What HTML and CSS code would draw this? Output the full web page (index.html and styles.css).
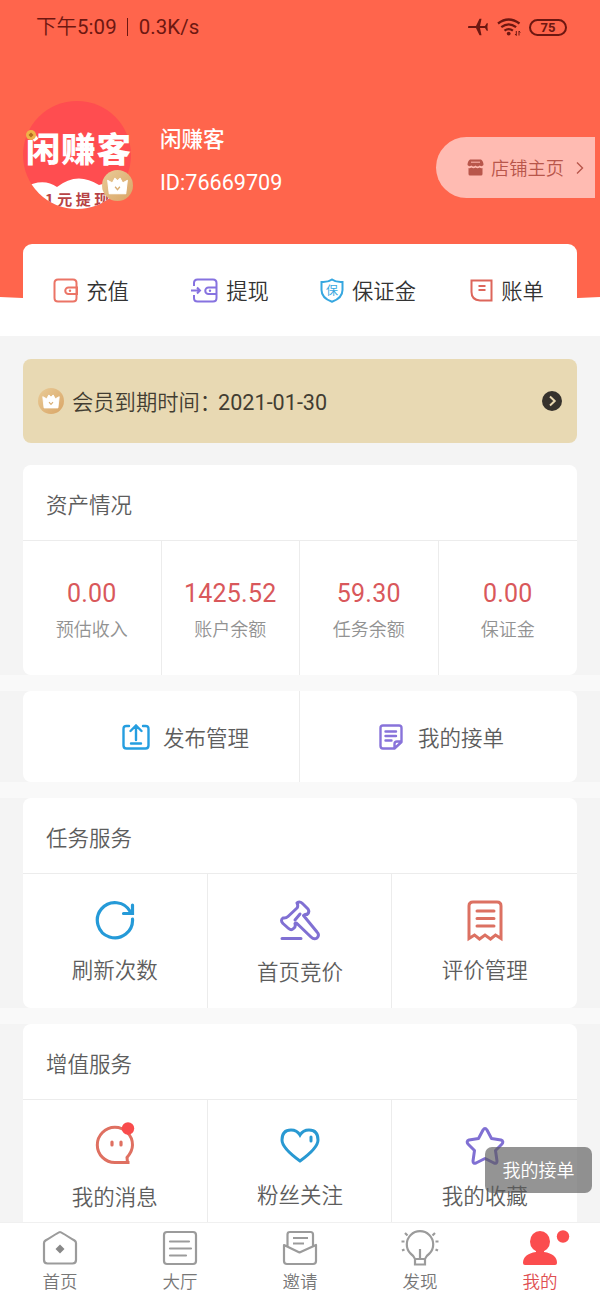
FILE: index.html
```html
<!DOCTYPE html>
<html lang="zh-CN">
<head>
<meta charset="utf-8">
<title>我的</title>
<link rel="stylesheet" href="styles.css">
</head>
<body>
<svg width="0" height="0" class="defs">
  <defs>
    <linearGradient id="gold" x1="0" y1="0" x2="1" y2="1"><stop offset="0" stop-color="#e9cb97"/><stop offset="1" stop-color="#d9a566"/></linearGradient>
    <symbol id="crown" viewBox="0 0 30 30">
      <circle cx="15" cy="15" r="15" fill="url(#gold)"/>
      <path d="M5.500 10 10 12.500 12.500 8 15 10.500 17.500 8 20 12.500 24.500 10 23 23H7z" fill="#fff" stroke="#fff" stroke-linejoin="round"/>
      <path d="M12.700 16.200 15 19l2.300-2.800" fill="none" stroke="#d9ae74" stroke-width="1.300"/>
    </symbol>
  </defs>
</svg>
<div class="screen">
  <header class="hero">
    <svg class="hero-bg" width="600" height="310" viewBox="0 0 600 310"><path d="M0 0H600V297Q300 312 0 297Z" fill="#ff654c"/></svg>
    <div class="status">
      <span class="clock">下午5:09<i class="bar"></i>0.3K/s</span>
      <span class="signals">
        <svg width="21" height="18" viewBox="0 0 21 18" fill="#6d1711"><path d="M1 7.900h7L11.500.800h2L12 7.900h5l1.700-2.600h1.200l-.5 3.700.5 3.700h-1.200L17 10.100h-5l1.500 7.100h-2L8 10.100H1a1.100 1.100 0 0 1 0-2.200z"/></svg>
        <svg width="24" height="19" viewBox="0 0 24 19" fill="none" stroke="#6d1711" stroke-width="2.300"><path d="M1 5.500Q11.500-2.500 22.500 5.500M4.300 9.200q7.400-5.600 14.800 0M7.500 12.700q4.200-3.200 8.400 0"/><circle cx="11.700" cy="15.600" r="1.900" fill="#6d1711" stroke="none"/><path d="M19.300 13v4.500M22 13v4.500M19.300 17.500l-1.300-1.500M22 13l1.300 1.500" stroke-width="1"/></svg>
        <b class="battery">75</b>
      </span>
    </div>
    <div class="profile">
      <div class="avatar">
        <svg width="112" height="109" viewBox="0 0 112 109">
          <defs><clipPath id="round"><circle cx="54" cy="54" r="54"/></clipPath></defs>
          <g clip-path="url(#round)">
            <rect width="112" height="109" fill="#ff4d50"/>
            <path d="M0 87Q20 76 34 86 54 70 76 84 92 78 112 90V109H0z" fill="#fff"/>
            <text x="22" y="103.500" class="logo-sub">1元提现</text>
          </g>
          <text x="3" y="61" class="logo-name" textLength="105">闲赚客</text>
          <circle cx="8" cy="34" r="5" fill="#efb347"/><path d="M8 31.500 10.500 34 8 36.500 5.500 34z" fill="#b26a20"/>
        </svg>
        <svg class="badge" width="31" height="31"><use href="#crown"/></svg>
      </div>
      <div class="who"><h1>闲赚客</h1><p>ID:76669709</p></div>
      <a class="shop">
        <svg width="17" height="17" viewBox="0 0 17 17"><path d="M3 .500H14Q16.500 2 16.500 6 15 8 12.700 6.500 10.500 8.500 8.500 6.500 6.500 8.500 4.300 6.500 2 8 .500 6 .500 2 3 .500z" fill="#b8564b"/><path d="M1.500 9Q3 9.500 4.300 8.600 6.500 10 8.500 8.600 10.500 10 12.700 8.600 14 9.500 15.500 9V15Q15.500 16.500 14 16.500H3Q1.500 16.500 1.500 15z" fill="#b8564b"/><path d="M4 3.200h9" stroke="#ffb9b0"/></svg>
        <span>店铺主页</span>
        <svg width="8" height="14" viewBox="0 0 8 14" fill="none" stroke="#b8564b" stroke-width="1.400"><path d="M1 1.500 6.500 7 1 12.500"/></svg>
      </a>
    </div>
    <nav class="wallet">
      <a><svg width="25" height="25" viewBox="0 0 25 25" fill="none" stroke="#eb7466" stroke-width="2"><path d="M23.500 9V5Q23.500 1.500 20 1.500H5Q1.500 1.500 1.500 5V20Q1.500 23.500 5 23.500H20Q23.500 23.500 23.500 20V5M24 9.500H15.500a3 3 0 0 0 0 6.500H24z"/><circle cx="17" cy="12.700" r="1.200" fill="#eb7466" stroke="none"/></svg><span>充值</span></a>
      <a><svg width="27" height="25" viewBox="0 0 27 25" fill="none" stroke="#8672e0" stroke-width="2"><path d="M3 8V5Q3 1.500 6.500 1.500H22Q25.500 1.500 25.500 5V20Q25.500 23.500 22 23.500H6.500Q3 23.500 3 20V17M26 9.500H17.500a3 3 0 0 0 0 6.500H26M25.500 5V20M0 12.500H8.500M6 9.500l3 3-3 3"/><circle cx="19" cy="12.700" r="1.200" fill="#8672e0" stroke="none"/></svg><span>提现</span></a>
      <a><svg width="24" height="25" viewBox="0 0 24 25"><path d="M12 1.500Q16 4.500 22.500 4V12Q22.500 20 12 23.800 1.500 20 1.500 12V4Q8 4.500 12 1.500z" fill="none" stroke="#36a7e0" stroke-width="2"/><text x="6" y="16.500" class="shield-text">保</text></svg><span>保证金</span></a>
      <a><svg width="23" height="23" viewBox="0 0 23 23" fill="none" stroke="#dd665b" stroke-width="2"><path d="M1.500 1.500h20v20H10Q1.500 21 1.500 13z"/><path d="M8.500 7H15.500M8.500 11H15.500"/></svg><span>账单</span></a>
    </nav>
  </header>

  <main>
    <section class="vip">
      <svg width="26" height="26"><use href="#crown" width="26" height="26"/></svg>
      <span>会员到期时间：<em>2021-01-30</em></span>
      <svg class="go" width="20" height="20" viewBox="0 0 20 20"><circle cx="10" cy="10" r="10" fill="#36322d"/><path d="M8 5.500 12.700 10 8 14.500" fill="none" stroke="#ead9b2" stroke-width="2"/></svg>
    </section>

    <section class="card">
      <h2>资产情况</h2>
      <div class="assets">
        <div><strong>0.00</strong><span>预估收入</span></div>
        <div><strong>1425.52</strong><span>账户余额</span></div>
        <div><strong>59.30</strong><span>任务余额</span></div>
        <div><strong>0.00</strong><span>保证金</span></div>
      </div>
    </section>
    <div class="band"></div>
    <section class="card manage">
      <a class="publish"><svg width="28" height="26" viewBox="0 0 28 26" fill="none" stroke="#259ee0" stroke-width="2.400" stroke-linecap="round"><path d="M7 2H4.500Q1.500 2 1.500 5V21.500Q1.500 24.500 4.500 24.500H23.500Q26.500 24.500 26.500 21.500V5Q26.500 2 23.500 2H21M14 16V2M8.500 7 14 1.500 19.500 7M9 19.500H19"/></svg><span>发布管理</span></a>
      <a class="orders"><svg width="24" height="26" viewBox="0 0 24 26" fill="none" stroke="#8873da" stroke-width="2.400" stroke-linecap="round" stroke-linejoin="round"><path d="M22.500 15V4Q22.500 1.500 20 1.500H4Q1.500 1.500 1.500 4V22Q1.500 24.500 4 24.500H15.500L22.500 18V15M15.500 24V20Q15.500 17.500 18 17.500H22M6.500 7.500H17M6.500 12H17M6.500 16.500H12.500"/></svg><span>我的接单</span></a>
    </section>
    <div class="band"></div>
    <section class="card">
      <h2>任务服务</h2>
      <div class="tiles">
        <a><svg width="40" height="40" viewBox="0 0 40 40" fill="none" stroke="#259ad8" stroke-width="3.200"><path d="M37.500 19A17.600 17.600 0 1 1 35.500 12M37.500 5V13.500H28.500" stroke-linecap="round"/></svg>刷新次数</a>
        <a class="low"><svg width="40" height="42" viewBox="0 0 40 42" fill="none" stroke="#8070d3" stroke-width="3" stroke-linecap="round" stroke-linejoin="round"><path d="M17 3Q20 .500 23 4L28 9Q30 12 27 14.500 25 14 23.500 15.500L37 32Q40 35 37 38 34 40 31 37L17.500 24Q16 22.500 15 23.500 16 27 13.500 28.500 11 31 8 28L3 23.500Q0 20 3 18 6 18.500 8 16.500L17 8Q18.500 6 17 3z"/><path d="M20 14 15 20M2 38.500H21"/></svg>首页竞价</a>
        <a><svg width="36" height="42" viewBox="0 0 36 42" fill="none" stroke="#dc7162" stroke-width="3"><path d="M2 38.500V6Q2 2 6 2H30Q34 2 34 6V38.500L28.500 35 23.500 39 18 35 12.500 39 7.500 35z"/><path d="M10 11H27M10 18.500H27M10 26H27" stroke-linecap="round"/></svg>评价管理</a>
      </div>
    </section>
    <div class="band"></div>
    <section class="card last">
      <h2>增值服务</h2>
      <div class="tiles">
        <a class="message"><svg width="40" height="43" viewBox="0 0 40 43"><path d="M34.500 40.500H20A17.600 17.600 0 1 1 37.500 23Q37.500 29 32 35.500L32.500 40.500" fill="none" stroke="#df7061" stroke-width="3"/><path d="M17 20v3M26 20v3" stroke="#df7061" stroke-width="3.200" stroke-linecap="round"/><circle cx="33" cy="6.500" r="6.200" fill="#f94b4c"/></svg>我的消息</a>
        <a class="fans"><svg width="40" height="36" viewBox="0 0 40 36" fill="none" stroke="#2999d2" stroke-width="3"><path d="M20 33Q2 20 2 12 2 2 11 2 17 2 20 7 23 2 29 2 38 2 38 12 38 20 20 33z"/><path d="M31 9V13" stroke-linecap="round"/></svg>粉丝关注</a>
        <a class="saved"><svg width="40" height="38" viewBox="0 0 40 38" fill="none" stroke="#8070d3" stroke-width="3" stroke-linejoin="round"><path d="M18 3Q20 0 22 3L26.500 11.500 36 13Q39 14 37 17L30.500 23.500 32 34Q32 37 29 36L20 31.500 11 36Q8 37 8 34L9.500 23.500 3 17Q1 14 4 13L13.500 11.500z"/></svg>我的收藏</a>
      </div>
    </section>
  </main>

  <div class="toast">我的接单</div>
  <footer class="tabs">
    <a><svg width="36" height="36" viewBox="0 0 36 36" fill="none" stroke="#9b9b9b" stroke-width="2.200"><path d="M18 2Q19 2 32.500 10.500 34 11.500 34 13V30Q34 33.500 30.500 33.500H5.500Q2 33.500 2 30V13Q2 11.500 3.500 10.500 17 2 18 2z"/><path d="M18 14.500 22.500 19 18 23.500 13.500 19z" fill="#888" stroke="none"/></svg>首页</a>
    <a><svg width="36" height="36" viewBox="0 0 36 36" fill="none" stroke="#9b9b9b" stroke-width="2.200" stroke-linecap="round"><rect x="2" y="2" width="32" height="32" rx="3"/><path d="M8 11.500H27M8 18.500H29M8 25.500H24"/></svg>大厅</a>
    <a><svg width="36" height="36" viewBox="0 0 36 36" fill="none" stroke="#9b9b9b" stroke-width="2.200" stroke-linejoin="round"><path d="M5.500 16V4.500Q5.500 2 8 2H28.500Q31 2 31 4.500V16M11 8H26M11 13.500H22M2 15 17.500 22.500 34 15V31Q34 34 31 34H5Q2 34 2 31z"/></svg>邀请</a>
    <a><svg width="38" height="36" viewBox="0 0 38 36" fill="none" stroke="#9b9b9b" stroke-width="2.200"><path d="M14 29Q13 26 9.500 23.500A13.200 13.200 0 1 1 28.500 23.500Q25 26 24 29zM14 29V34.500H24V29M19 29V19M.500 11.500H3.500M1 20.500 3.500 19.500M34.500 11.500H37.500M34.500 19.500 37 20.500M4 3 6.500 5.500M34 3 31.500 5.500"/></svg>发现</a>
    <a class="active"><svg width="50" height="36" viewBox="0 0 50 36" fill="#fb4d4e"><ellipse cx="18" cy="11.500" rx="10" ry="10.500"/><path d="M14 18H22V22Q35 24 35 33Q35 35 33 35H3Q1 35 1 33 1 24 14 22z"/><circle cx="41" cy="6.500" r="6.200"/></svg>我的</a>
  </footer>
</div>
</body>
</html>
```
FILE: styles.css
```css
* { box-sizing: border-box; }
body { margin: 0; font-family: Roboto, "Noto Sans CJK SC DemiLight", "Noto Sans CJK SC", sans-serif; font-weight: 350; }
h1, h2, p { margin: 0; font-weight: inherit; }
svg { display: block; flex: none; }
.defs { position: absolute; }
.screen { position: relative; width: 600px; height: 1300px; overflow: hidden; background: #f4f4f4; display: flex; flex-direction: column; }

.hero { position: relative; height: 336px; flex: none; background: #fff; }
.hero-bg { position: absolute; top: 0; left: 0; }
.status { position: relative; height: 54px; padding: 0 33px 0 36px; display: flex; align-items: center; justify-content: space-between; color: #6d1711; }
.clock { display: flex; align-items: center; font-size: 20.400px; line-height: 24px; font-weight: 400; letter-spacing: .1px; }
.bar { width: 1px; height: 18px; margin: 0 11px 0 10px; background: #6d1711; }
.signals { display: flex; align-items: center; gap: 8px; }
.battery { width: 38px; height: 17px; border: 2px solid #6d1711; border-radius: 9px; font-size: 13px; line-height: 14px; font-weight: 700; text-align: center; }

.profile { position: relative; height: 190px; padding: 47px 5px 0 23px; display: flex; align-items: flex-start; }
.avatar { position: relative; width: 112px; height: 109px; }
.badge { position: absolute; left: 79px; top: 69px; }
.logo-name { font: 900 34.500px "Noto Sans CJK SC", sans-serif; fill: #fff; }
.logo-sub { font: 700 15px "Noto Sans CJK SC", sans-serif; letter-spacing: 3.500px; fill: #b74345; }
.who { margin-left: 25px; color: #fff; font-weight: 400; }
.who h1 { margin-top: 22px; font-family: "Noto Sans CJK SC", sans-serif; font-size: 21.500px; line-height: 30px; font-weight: 500; }
.who p { margin-top: 15px; font-size: 21.600px; line-height: 30px; }
.shop { width: 159px; height: 61px; margin: 36px 0 0 auto; padding-left: 31px; border-radius: 31px 0 0 31px; background: #ffbbb2; display: flex; align-items: center; color: #b8564b; font-size: 18.300px; }
.shop span { margin: -2px 12px 0 7px; }

.wallet { position: relative; height: 92px; margin: 0 23px; padding-right: 2px; background: #fff; border-radius: 9px 9px 0 0; display: grid; grid-template-columns: repeat(4, 1fr); color: #333; font-size: 21.300px; }
.wallet a { display: flex; align-items: center; justify-content: center; gap: 8px; }
.wallet a:first-child { padding-right: 2px; }
.wallet a:last-child { padding-left: 2px; }
.wallet span { margin-top: -1px; }
.shield-text { font: 400 12px "Noto Sans CJK SC", sans-serif; fill: #36a7e0; }

main { flex: 1; padding-top: 23px; }
.vip { height: 84px; margin: 0 23px 22px; padding: 0 15px; border-radius: 8px; background: #e8d9b3; display: flex; align-items: center; color: #423d32; font-size: 21.300px; }
.vip span { margin: -2px 0 0 8px; white-space: nowrap; }
.vip em { margin-left: -3px; font-style: normal; font-size: 21.600px; font-weight: 400; }
.go { margin-left: auto; }

.card { margin: 0 23px; background: #fff; border-radius: 8px; overflow: hidden; color: #5d5d5d; font-size: 21.500px; }
.card h2 { height: 76px; padding: 2px 23px 0; border-bottom: 1px solid #ececec; font-size: 21.500px; line-height: 77px; }
.band { height: 16px; background: #f9f9f9; }
.assets { height: 134px; display: grid; grid-template-columns: repeat(4, 1fr); }
.assets div { display: flex; flex-direction: column; align-items: center; padding-top: 37px; }
.assets div:not(:last-child), .publish, .tiles a:not(:last-child) { border-right: 1px solid #ececec; }
.assets strong { color: #d9585b; font-size: 25px; line-height: 32px; font-weight: 400; letter-spacing: .2px; }
.assets span { margin-top: 6px; color: #929292; font-size: 18px; line-height: 27px; }
.manage { height: 91px; display: grid; grid-template-columns: 1fr 1fr; }
.manage a { display: flex; align-items: center; gap: 13px; padding-left: 99px; }
.manage .orders { padding-left: 79px; gap: 15px; }
.tiles { height: 134px; display: grid; grid-template-columns: repeat(3, 1fr); }
.tiles a { display: flex; flex-direction: column; align-items: center; justify-content: space-between; padding: 26px 0 21px; line-height: 32px; }
.tiles .low { padding: 26px 0 19px 1px; }
.tiles .message { padding: 22px 0 20px; }
.tiles .fans { padding: 28px 0 22px 1px; }
.tiles .saved { padding: 27px 0 21px; }

.toast { position: absolute; left: 485px; top: 1147px; width: 107px; height: 46px; border-radius: 7px; background: rgba(91, 91, 91, .65); color: #fff; font-size: 18px; line-height: 47px; text-align: center; }
.tabs { position: absolute; left: 0; right: 0; bottom: 0; height: 78px; border-top: 1px solid #f0f0f0; background: #fff; display: grid; grid-template-columns: repeat(5, 1fr); color: #777; font-size: 17.500px; }
.tabs a { display: flex; flex-direction: column; align-items: center; padding-top: 7px; line-height: 28px; gap: 2px; }
.tabs .active { color: #df5052; }
.tabs .active svg { margin-left: 14px; }
```
